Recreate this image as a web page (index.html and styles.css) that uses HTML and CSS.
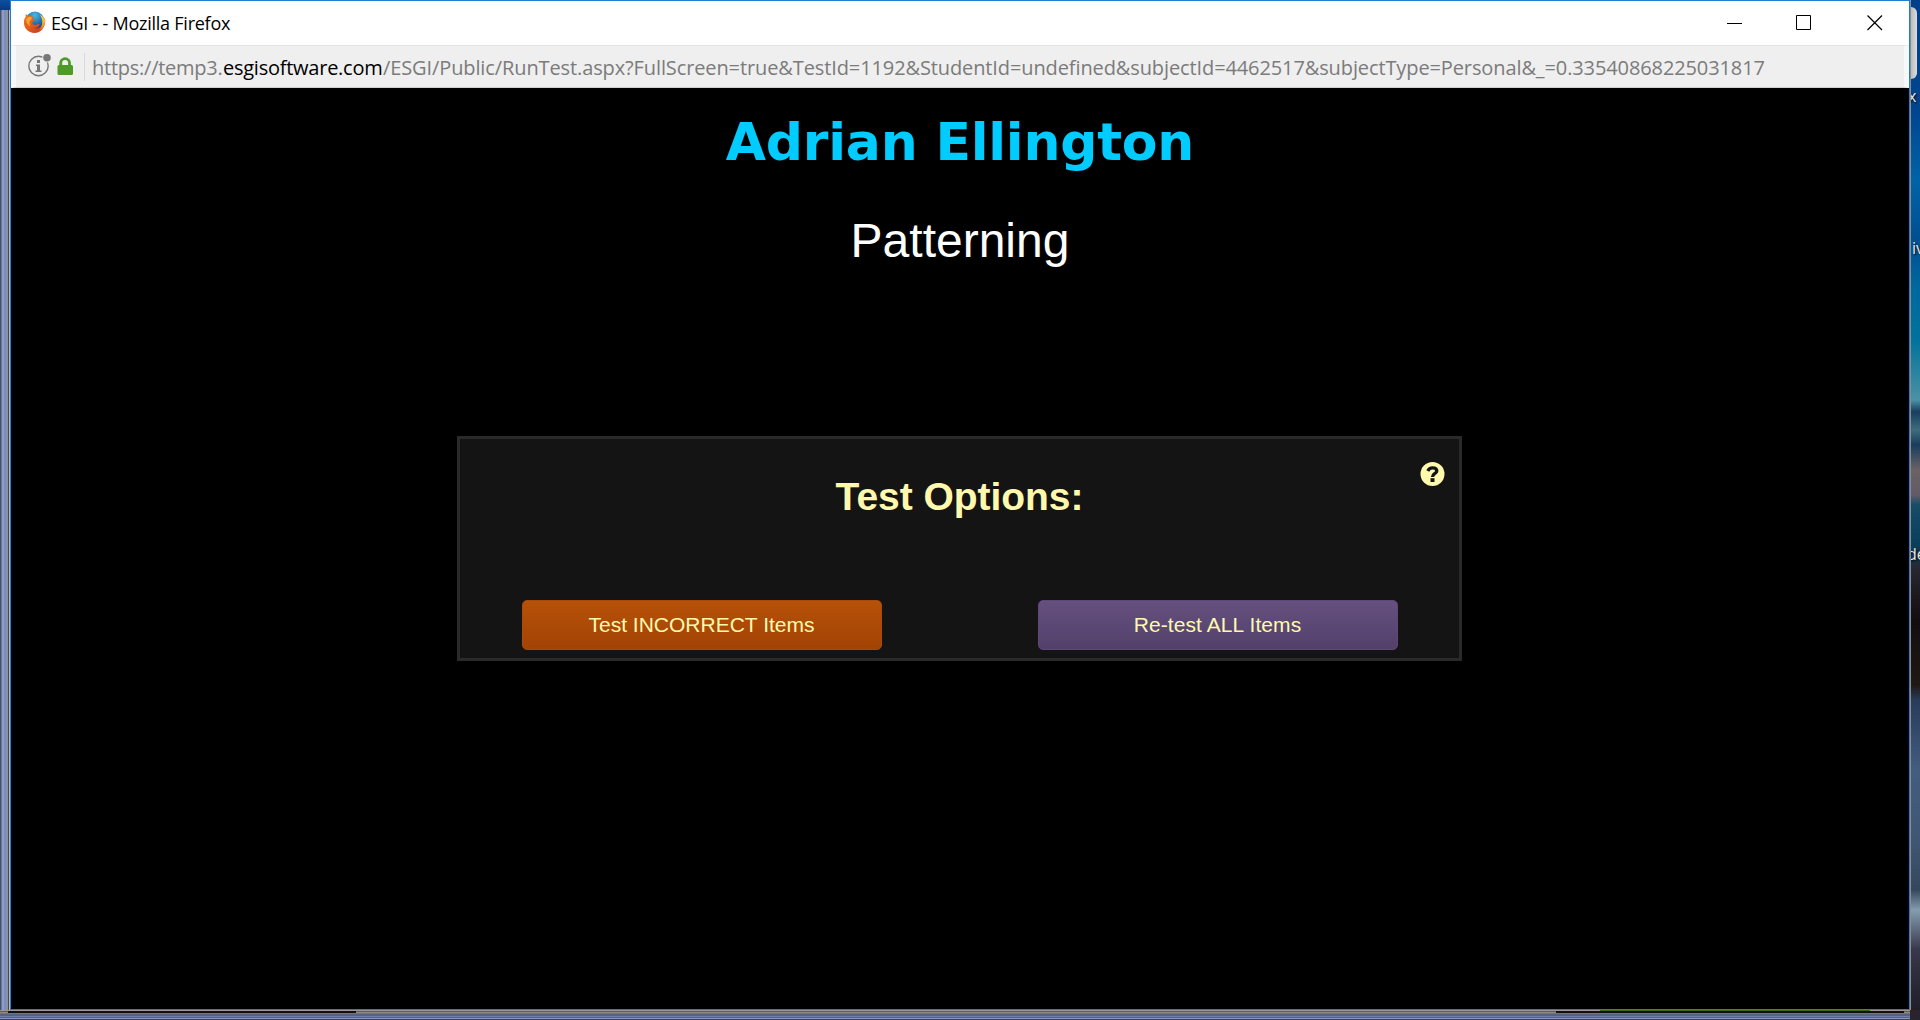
FILE: index.html
```html
<!DOCTYPE html>
<html lang="en">
<head>
<meta charset="utf-8">
<title>ESGI - - Mozilla Firefox</title>
<link rel="stylesheet" href="styles.css">
</head>
<body>
<div class="desktop">
  <div class="edge-left"></div>
  <main class="window">
    <header class="titlebar">
      <svg class="firefox" viewBox="0 0 24 24">
        <defs>
          <radialGradient id="globe" cx=".5" cy=".2" r=".8"><stop offset="0" stop-color="#48b8e8"/><stop offset=".6" stop-color="#1b69a8"/><stop offset="1" stop-color="#163a6b"/></radialGradient>
          <linearGradient id="fox" x1="0" y1="0" x2="1" y2="1"><stop offset="0" stop-color="#e87a1c"/><stop offset=".5" stop-color="#e25a1c"/><stop offset="1" stop-color="#c8301c"/></linearGradient>
          <linearGradient id="tail" x1="0" y1="0" x2="0" y2="1"><stop offset="0" stop-color="#ffe04a"/><stop offset="1" stop-color="#ee7a1a"/></linearGradient>
        </defs>
        <circle cx="12.4" cy="10.6" r="10" fill="url(#globe)"/>
        <path d="M3.2 3.2 5 5.4C6.500 4.800 8 5 9 5.600L11 5.300C9.800 6.200 9.500 7.200 10.200 8L12.500 8.700C12.600 9.900 11 10.300 9.900 11.200C9.500 13 10.500 14.500 12.500 14.500C14.500 14.500 15.500 13 17.500 14C16.500 17 13.500 18 11 17.500C15 19.500 20 17 20.500 12C21 8 19 5.500 17.500 4C21 5.500 22.500 8 22.600 9.500L22.900 7.500C24.300 14.500 20 23 12 23C5 23 .8 17.500 1 12C1 9.500 1.600 7.700 2.800 6.300C2.600 5 2.700 4 3.200 3.200Z" fill="url(#fox)"/>
        <path d="M17.500 4C21 5.500 22.500 8 22.600 9.500L22.900 7.500C23.800 13 21.500 18 17.300 20.200C20.500 16 21.500 8.500 17.500 4Z" fill="url(#tail)"/>
        <path d="M3.200 8.500C4.500 6.500 7 6 9 6.500L8.800 9C6.500 9.500 6 14 8 16.500C5 15 3.500 12 3.200 8.500Z" fill="#f6a431"/>
      </svg>
      <h1 class="window-title">ESGI - - Mozilla Firefox</h1>
      <svg class="controls" viewBox="0 0 158 18" fill="none" stroke="#000">
        <path d="M0 9.500H15M69.500 1.500h14v14h-14z"/>
        <path d="M140.500 1.500l14.500 14.500M155 1.500l-14.500 14.500" stroke-width="1.200"/>
      </svg>
    </header>
    <div class="addressbar">
      <svg class="security" viewBox="0 0 46 24">
        <circle cx="10.500" cy="13" r="9.700" fill="none" stroke="#777" stroke-width="1.400"/>
        <circle cx="19" cy="4.800" r="4.800" fill="#efefef"/>
        <circle cx="19" cy="4.800" r="3.800" fill="#777"/>
        <path d="M9 7h3v3H9zM8 11.500h4v6h1.500v1.500h-6v-1.500H9v-4.500H8z" fill="#777"/>
        <path d="M32.700 13v-3a4.400 4.400 0 0 1 8.800 0v3" fill="none" stroke="#4e9a26" stroke-width="2.800"/>
        <rect x="29.500" y="12" width="15.500" height="9.900" rx="1.500" fill="#4e9a26"/>
      </svg>
      <span class="divider"></span>
      <p class="url"><span class="scheme">https://temp3.</span><span class="domain">esgisoftware.com</span><span class="path">/ESGI/Public/RunTest.aspx?FullScreen=true&amp;TestId=1192&amp;StudentId=undefined&amp;subjectId=4462517&amp;subjectType=Personal&amp;_=0.33540868225031817</span></p>
    </div>
    <section class="page">
      <h2 class="student">Adrian Ellington</h2>
      <p class="test-name">Patterning</p>
      <div class="panel">
        <h3 class="panel-title">Test Options:</h3>
        <svg class="help" viewBox="0 0 24 24">
          <circle cx="12" cy="12" r="12" fill="#fff9ae"/>
          <path d="M7.300 9C8.300 6.900 9.800 5.900 12 5.900C14.700 5.900 16.300 7.300 16.300 9C16.300 11.500 12 11.500 12 15" fill="none" stroke="#141414" stroke-width="3.300"/>
          <path d="M10 16.200h4V20h-4z" fill="#141414"/>
        </svg>
        <div class="actions">
          <button class="btn orange">Test INCORRECT Items</button>
          <button class="btn purple">Re-test ALL Items</button>
        </div>
      </div>
    </section>
  </main>
  <aside class="edge-right">
    <span class="tile"></span>
    <span class="label label-x">x</span>
    <span class="label label-iv">iv</span>
    <span class="label label-de">de</span>
  </aside>
  <footer class="edge-bottom"><span class="strip"></span><span class="strip"></span></footer>
</div>
</body>
</html>
```
FILE: styles.css
```css
* { box-sizing: border-box; }
body { margin: 0; background: #000; }
h1, h2, h3, p { margin: 0; font-weight: normal; white-space: nowrap; }
svg { display: block; flex: none; }

.desktop {
  display: grid;
  grid-template-columns: 10px 1900px 10px;
  grid-template-rows: 1010px 10px;
  width: 1920px;
  height: 1020px;
  overflow: hidden;
}
.edge-left {
  background:
    linear-gradient(#0b50a5, #073b80) 0 0 / 10px 10px no-repeat,
    linear-gradient(90deg, #4a5064 0 1px, #6b7694 1px 2px, #8c9dcb 2px 4px, #7d8dbb 4px 6px, #8593a8 6px 8px, #444a55 8px 9px, #b5bcc8 9px);
}
.window {
  display: flex;
  flex-direction: column;
  border: 1px solid #1e7fd0;
  background: #000;
}

.titlebar {
  display: flex;
  align-items: center;
  height: 44px;
  padding: 0 24px 0 12px;
  background: #fff;
}
.firefox { width: 23px; height: 23px; margin-bottom: 2px; }
.window-title {
  margin-left: 5px;
  font: 18px/24px "Open Sans", "Noto Sans", sans-serif;
  letter-spacing: -0.24px;
  color: #000;
}
.controls { width: 158px; height: 18px; margin-left: auto; }

.addressbar {
  display: flex;
  align-items: center;
  height: 43px;
  padding-left: 12px;
  background: #efefef;
  border-top: 1px solid #e2e2e2;
  border-bottom: 1px solid #d0d0d0;
  border-left: 5px solid #f8f8f8;
  border-right: 5px solid #f8f8f8;
}
.security { width: 46px; height: 24px; margin-bottom: 3px; }
.divider { width: 1px; height: 28px; margin-left: 10px; background: #d7d7d7; }
.url {
  margin: 2px 0 0 7px;
  font: 20px/28px "Open Sans", "Noto Sans", sans-serif;
  color: #7b7b7b;
}
.url span { display: inline-block; }
.scheme { width: 131px; letter-spacing: -0.25px; }
.domain { width: 160px; letter-spacing: -0.25px; color: #000; }
.path { letter-spacing: -0.11px; }

.page {
  display: flex;
  flex: 1;
  flex-direction: column;
  align-items: center;
  padding-top: 23px;
  background: #000;
}
.student {
  font: bold 52px/62px "DejaVu Sans", Verdana, sans-serif;
  letter-spacing: -0.23px;
  color: #00ccff;
}
.test-name {
  margin-top: 40px;
  font: 48px/56px "Liberation Sans", Arial, sans-serif;
  color: #fff;
}
.panel {
  position: relative;
  display: flex;
  flex-direction: column;
  align-items: center;
  width: 1005px;
  height: 225px;
  margin-top: 167px;
  margin-right: 1px;
  padding-top: 35px;
  border: 3px solid #2a2a2a;
  background: #141414;
}
.panel-title {
  font: bold 39px/46px "Liberation Sans", Arial, sans-serif;
  letter-spacing: -0.05px;
  color: #fff9ae;
}
.help { position: absolute; top: 23px; right: 14px; width: 25px; height: 24px; }
.actions { display: flex; gap: 156px; margin-top: 80px; }
.btn {
  width: 360px;
  height: 50px;
  padding: 0;
  border: 1px solid;
  border-radius: 5px;
  font: 21px/24px "Liberation Sans", Arial, sans-serif;
  color: #fff9ae;
}
.orange { background: linear-gradient(#b65108, #a24305); border-color: #ab4a08; }
.purple { background: linear-gradient(#65507f, #53406a); border-color: #5e4878; letter-spacing: 0.08px; }

.edge-right {
  position: relative;
  overflow: hidden;
  border-left: 1px solid #8b8c8e;
  background: linear-gradient(#003f8c 0, #00458e 110px, #0063a8 180px, #004f90 240px, #0069a0 290px, #00729c 340px, #4b92a4 400px, #183d5f 412px, #3f6c7d 430px, #193d5d 445px, #6c6265 470px, #625b67 495px, #174d66 505px, #083f5b 545px, #292630 570px, #110d10 620px, #211814 685px, #283b5a 700px, #435d80 770px, #405774 840px, #35475d 890px, #849db0 910px, #39374a 950px, #211e29 1010px);
}
.tile { position: absolute; left: 0; top: 7px; width: 6px; height: 72px; border-radius: 0 6px 6px 0; background: linear-gradient(90deg, #bbb, #ddd); }
.label {
  position: absolute;
  font: 16px/20px "Open Sans", "Noto Sans", sans-serif;
  color: #e8e8e8;
  text-shadow: 1px 1px 2px #000;
}
.label-x { left: -3px; top: 86px; }
.label-iv { left: 1px; top: 238px; }
.label-de { left: -4px; top: 544px; }

.edge-bottom {
  grid-column: 1 / -1;
  display: flex;
  justify-content: space-between;
  padding: 1px 16px 0 8px;
  background:
    linear-gradient(#29232d, #29232d) 100% 0 / 10px 10px no-repeat,
    linear-gradient(90deg, #3d6514, #3d6514) 1600px 0 / 270px 1px no-repeat,
    linear-gradient(#999 0 1px, #5a5d60 1px 2px, #8a8a88 2px 3px, #6a7690 3px 4px, #59627c 4px 6px, #7180a5 6px 7px, #59627c 7px 8px, #8795c0 8px 9px, #3c4252 9px);
}
.strip { width: 348px; height: 2px; background: #111; }
```
